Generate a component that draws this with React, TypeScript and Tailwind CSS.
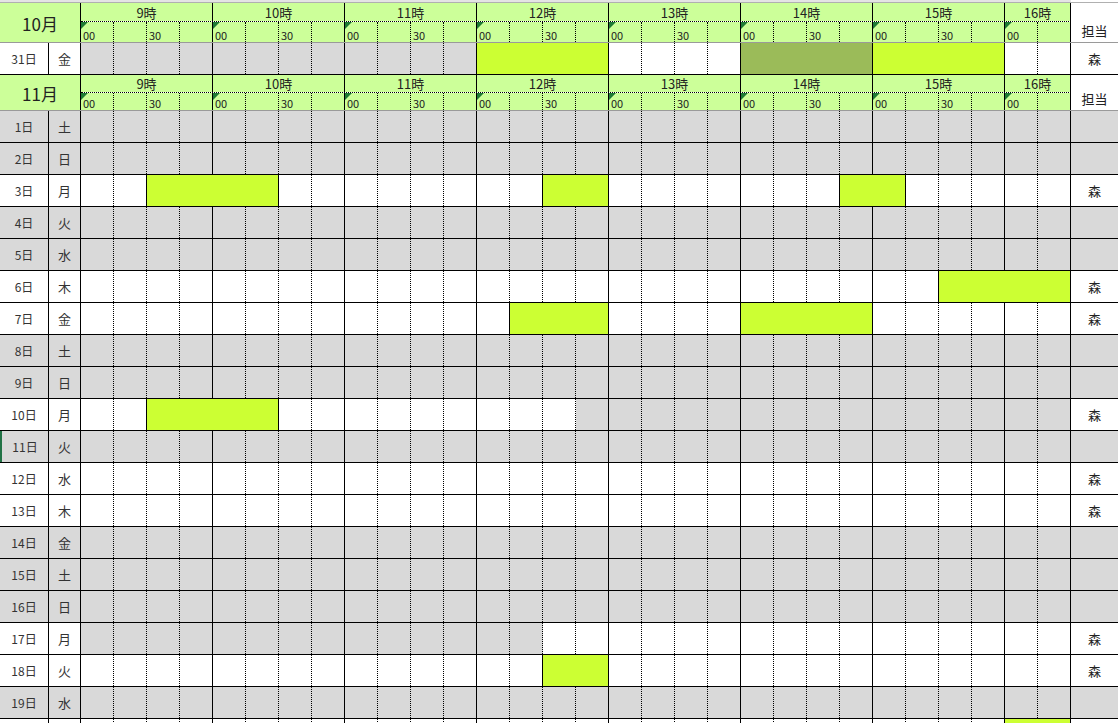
import React from "react"

type Kind = "w" | "g" | "b" | "o"
type Seg = [number, number, Kind]

const FONT = { fontFamily: '"Noto Sans CJK JP", "Noto Sans", sans-serif' }
const HOURS = ["9時", "10時", "11時", "12時", "13時", "14時", "15時", "16時"]
const TOTAL = 30

const KIND_BG: Record<Kind, string> = {
  w: "bg-white",
  g: "bg-[#d9d9d9]",
  b: "bg-[#ccff33]",
  o: "bg-[#9bbb59]",
}

interface DayRow {
  date: string
  wd: string
  segs: Seg[]
  tanto?: string
  marker?: boolean
  white?: boolean
}

const W: Seg = [0, 30, "w"]
const G: Seg = [0, 30, "g"]

const ROWS: DayRow[] = [
  { date: "1日", wd: "土", segs: [G] },
  { date: "2日", wd: "日", segs: [G] },
  { date: "3日", wd: "月", segs: [W, [2, 6, "b"], [14, 16, "b"], [23, 25, "b"]], tanto: "森" },
  { date: "4日", wd: "火", segs: [G] },
  { date: "5日", wd: "水", segs: [G] },
  { date: "6日", wd: "木", segs: [W, [26, 30, "b"]], tanto: "森" },
  { date: "7日", wd: "金", segs: [W, [13, 16, "b"], [20, 24, "b"]], tanto: "森" },
  { date: "8日", wd: "土", segs: [G] },
  { date: "9日", wd: "日", segs: [G] },
  { date: "10日", wd: "月", segs: [W, [2, 6, "b"], [15, 30, "g"]], tanto: "森" },
  { date: "11日", wd: "火", segs: [G], marker: true },
  { date: "12日", wd: "水", segs: [W], tanto: "森" },
  { date: "13日", wd: "木", segs: [W], tanto: "森" },
  { date: "14日", wd: "金", segs: [G] },
  { date: "15日", wd: "土", segs: [G] },
  { date: "16日", wd: "日", segs: [G] },
  { date: "17日", wd: "月", segs: [W, [0, 14, "g"]], tanto: "森" },
  { date: "18日", wd: "火", segs: [W, [14, 16, "b"]], tanto: "森" },
  { date: "19日", wd: "水", segs: [G] },
  // only the top edge of this row shows at the bottom of the window
  { date: "", wd: "", segs: [W, [28, 30, "b"]], white: true },
]

function kindsOf(segs: Seg[]): Kind[] {
  const k: Kind[] = Array(TOTAL).fill("w")
  segs.forEach(([s, e, kind]) => {
    for (let i = s; i < e; i++) k[i] = kind
  })
  return k
}

function TimeCells({ segs }: { segs: Seg[] }) {
  const kinds = kindsOf(segs)
  const out: React.ReactNode[] = []
  let i = 0
  while (i < TOTAL) {
    const kind = kinds[i]
    if (kind === "b" || kind === "o") {
      let j = i
      while (j < TOTAL && kinds[j] === kind) j++
      out.push(
        <div
          key={i}
          className={`h-full border-r border-black ${KIND_BG[kind]}`}
          style={{ width: (j - i) * 33 }}
        />
      )
      i = j
    } else {
      const next = kinds[i + 1]
      const solid = (i + 1) % 4 === 0 || i === TOTAL - 1 || next === "b" || next === "o"
      out.push(
        <div
          key={i}
          className={`h-full w-[33px] border-r border-black ${solid ? "" : "border-dotted"} ${KIND_BG[kind]}`}
        />
      )
      i++
    }
  }
  return <div className="flex h-full">{out}</div>
}

function Triangle() {
  return (
    <svg className="absolute left-0 top-0" width="7" height="7" viewBox="0 0 7 7">
      <polygon points="0,0 7,0 0,7" fill="#1e7b34" />
    </svg>
  )
}

function Header({ month, hourH, minH }: { month: string; hourH: string; minH: string }) {
  return (
    <div className="flex border-b border-[#9a9a9a]">
      <div className="w-[81px] bg-[#ccff99] border-r border-black flex items-center justify-center text-[17px] text-[#222] pt-[2px]">
        {month}
      </div>
      <div className="flex flex-col">
        <div className={`flex ${hourH} border-b border-dotted border-black`}>
          {HOURS.map((h, idx) => (
            <div
              key={h}
              className={`${idx === 7 ? "w-[66px]" : "w-[132px]"} h-full bg-[#ccff99] border-r border-solid border-black flex items-center justify-center text-[13px] leading-none text-[#222]`}
            >
              {h}
            </div>
          ))}
        </div>
        <div className={`flex ${minH}`}>
          {Array.from({ length: TOTAL }).map((_, i) => {
            const solid = (i + 1) % 4 === 0 || i === TOTAL - 1
            const label = i % 4 === 0 ? "00" : i % 4 === 2 ? "30" : ""
            return (
              <div
                key={i}
                className={`relative w-[33px] h-full bg-[#ccff99] border-r border-black ${solid ? "" : "border-dotted"} flex items-end pl-[2px] pb-[1px] text-[11px] leading-none text-[#222]`}
              >
                {i % 4 === 0 && <Triangle />}
                {label}
              </div>
            )
          })}
        </div>
      </div>
      <div className="w-[47px] bg-white flex items-end justify-center pb-[5px] text-[13px] leading-none text-[#222]">
        担当
      </div>
    </div>
  )
}

function Row({ row }: { row: DayRow }) {
  const gray = !row.tanto && !row.white
  const labelBg = gray ? "bg-[#d9d9d9]" : "bg-white"
  return (
    <div className="flex h-[32px] border-b border-black shrink-0">
      <div
        className={`w-[49px] h-full border-r border-black ${labelBg} ${row.marker ? "border-l-2 border-l-[#217346]" : ""} flex items-center justify-center text-[12px] text-[#333]`}
      >
        {row.date}
      </div>
      <div className={`w-[32px] h-full border-r border-black ${labelBg} flex items-center justify-center text-[13px] text-[#333]`}>
        {row.wd}
      </div>
      <TimeCells segs={row.segs} />
      <div className={`w-[47px] h-full ${labelBg} flex items-center justify-center text-[13px] text-[#222]`}>
        {row.tanto ?? ""}
      </div>
    </div>
  )
}

export default function App() {
  return (
    <div className="w-[1118px] h-[723px] overflow-hidden bg-white" style={FONT}>
      <div className="flex h-[3px] border-b border-[#b0b0b0]">
        <div className="w-[1071px] bg-[#e4e4e4]" />
        <div className="flex-1 bg-white" />
      </div>
      <Header month="10月" hourH="h-[19px]" minH="h-[20px]" />
      <Row
        row={{
          date: "31日",
          wd: "金",
          segs: [[0, 12, "g"], [12, 16, "b"], [16, 20, "w"], [20, 24, "o"], [24, 28, "b"], [28, 30, "w"]],
          tanto: "森",
        }}
      />
      <Header month="11月" hourH="h-[18px]" minH="h-[17px]" />
      {ROWS.map((r, i) => (
        <Row key={i} row={r} />
      ))}
    </div>
  )
}
